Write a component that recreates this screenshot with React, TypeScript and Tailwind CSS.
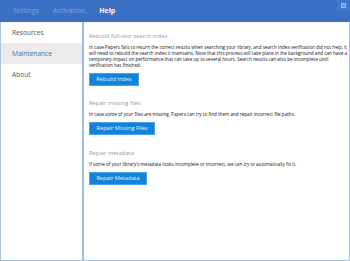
const sidebarItems = ['Resources', 'Maintenance', 'About']

const sections = [
  {
    title: 'Rebuild full-text search index',
    lines: [
      'In case Papers fails to return the correct results when searching your library, and search index verification did not help, it',
      'will need to rebuild the search index it maintains. Note that this process will take place in the background and can have a',
      'temporary impact on performance that can take up to several hours. Search results can also be incomplete until',
      'verification has finished.',
    ],
    button: 'Rebuild Index',
    width: 'w-[50px]',
    gap: 'mt-[10px]',
  },
  {
    title: 'Repair missing files',
    lines: ['In case some of your files are missing, Papers can try to find them and repair incorrect file paths.'],
    button: 'Repair Missing Files',
    width: 'w-[66px]',
    gap: 'mt-[13px]',
  },
  {
    title: 'Repair metadata',
    lines: ["If some of your library's metadata looks incomplete or incorrect, we can try to automatically fix it."],
    button: 'Repair Metadata',
    width: 'w-[58px]',
    gap: 'mt-[14px]',
  },
]

export default function App() {
  return (
    <div className="w-[350px] h-[261px] flex flex-col bg-white font-['Open_Sans','Noto_Sans',sans-serif]">
      <div className="h-[22px] bg-[#3b6fc4] flex items-start">
        <div className="flex items-center h-[22px] pl-[13px] gap-[14px] text-[7px]">
          <span className="text-[#7fa2dc]">Settings</span>
          <span className="text-[#7fa2dc]">Activation</span>
          <span className="text-white font-bold">Help</span>
        </div>
        <div className="ml-auto w-[13px] h-[10px] bg-[#4577c8] flex items-center justify-center">
          <svg width="5" height="5" viewBox="0 0 5 5">
            <rect x="0" y="0" width="5" height="5" fill="#9fb9e4" />
            <path d="M1 1 L4 4 M4 1 L1 4" stroke="#3b6fc4" strokeWidth="0.8" />
          </svg>
        </div>
      </div>

      <div className="flex-1 flex border-x border-b border-[#a6c3e3]">
        <div className="w-[83px] shrink-0 border-r-2 border-[#9dbde2] flex flex-col">
          {sidebarItems.map((item) => (
            <div
              key={item}
              className={
                item === 'Maintenance'
                  ? 'h-[21px] flex items-center pl-[11px] text-[6.6px] bg-[#ebebeb] text-[#3a72b8]'
                  : 'h-[21px] flex items-center pl-[11px] text-[6.6px] text-[#555]'
              }
            >
              {item}
            </div>
          ))}
        </div>

        <div className="flex-1 min-w-0 overflow-hidden pl-[5px]">
          {sections.map((s) => (
            <div key={s.title} className={s.gap}>
              <div className="text-[5.8px] leading-[8px] text-[#999]">{s.title}</div>
              <div className="mt-[4px] text-[4.6px] leading-[6px] text-[#111] whitespace-nowrap">
                {s.lines.map((l) => (
                  <div key={l}>{l}</div>
                ))}
              </div>
              <button
                className={`mt-[5px] ${s.width} h-[13px] bg-[#1283d8] border border-[#4aa3e8] text-[#eaf4fc] text-[5.6px] flex items-center justify-center`}
              >
                {s.button}
              </button>
            </div>
          ))}
        </div>
      </div>
    </div>
  )
}
